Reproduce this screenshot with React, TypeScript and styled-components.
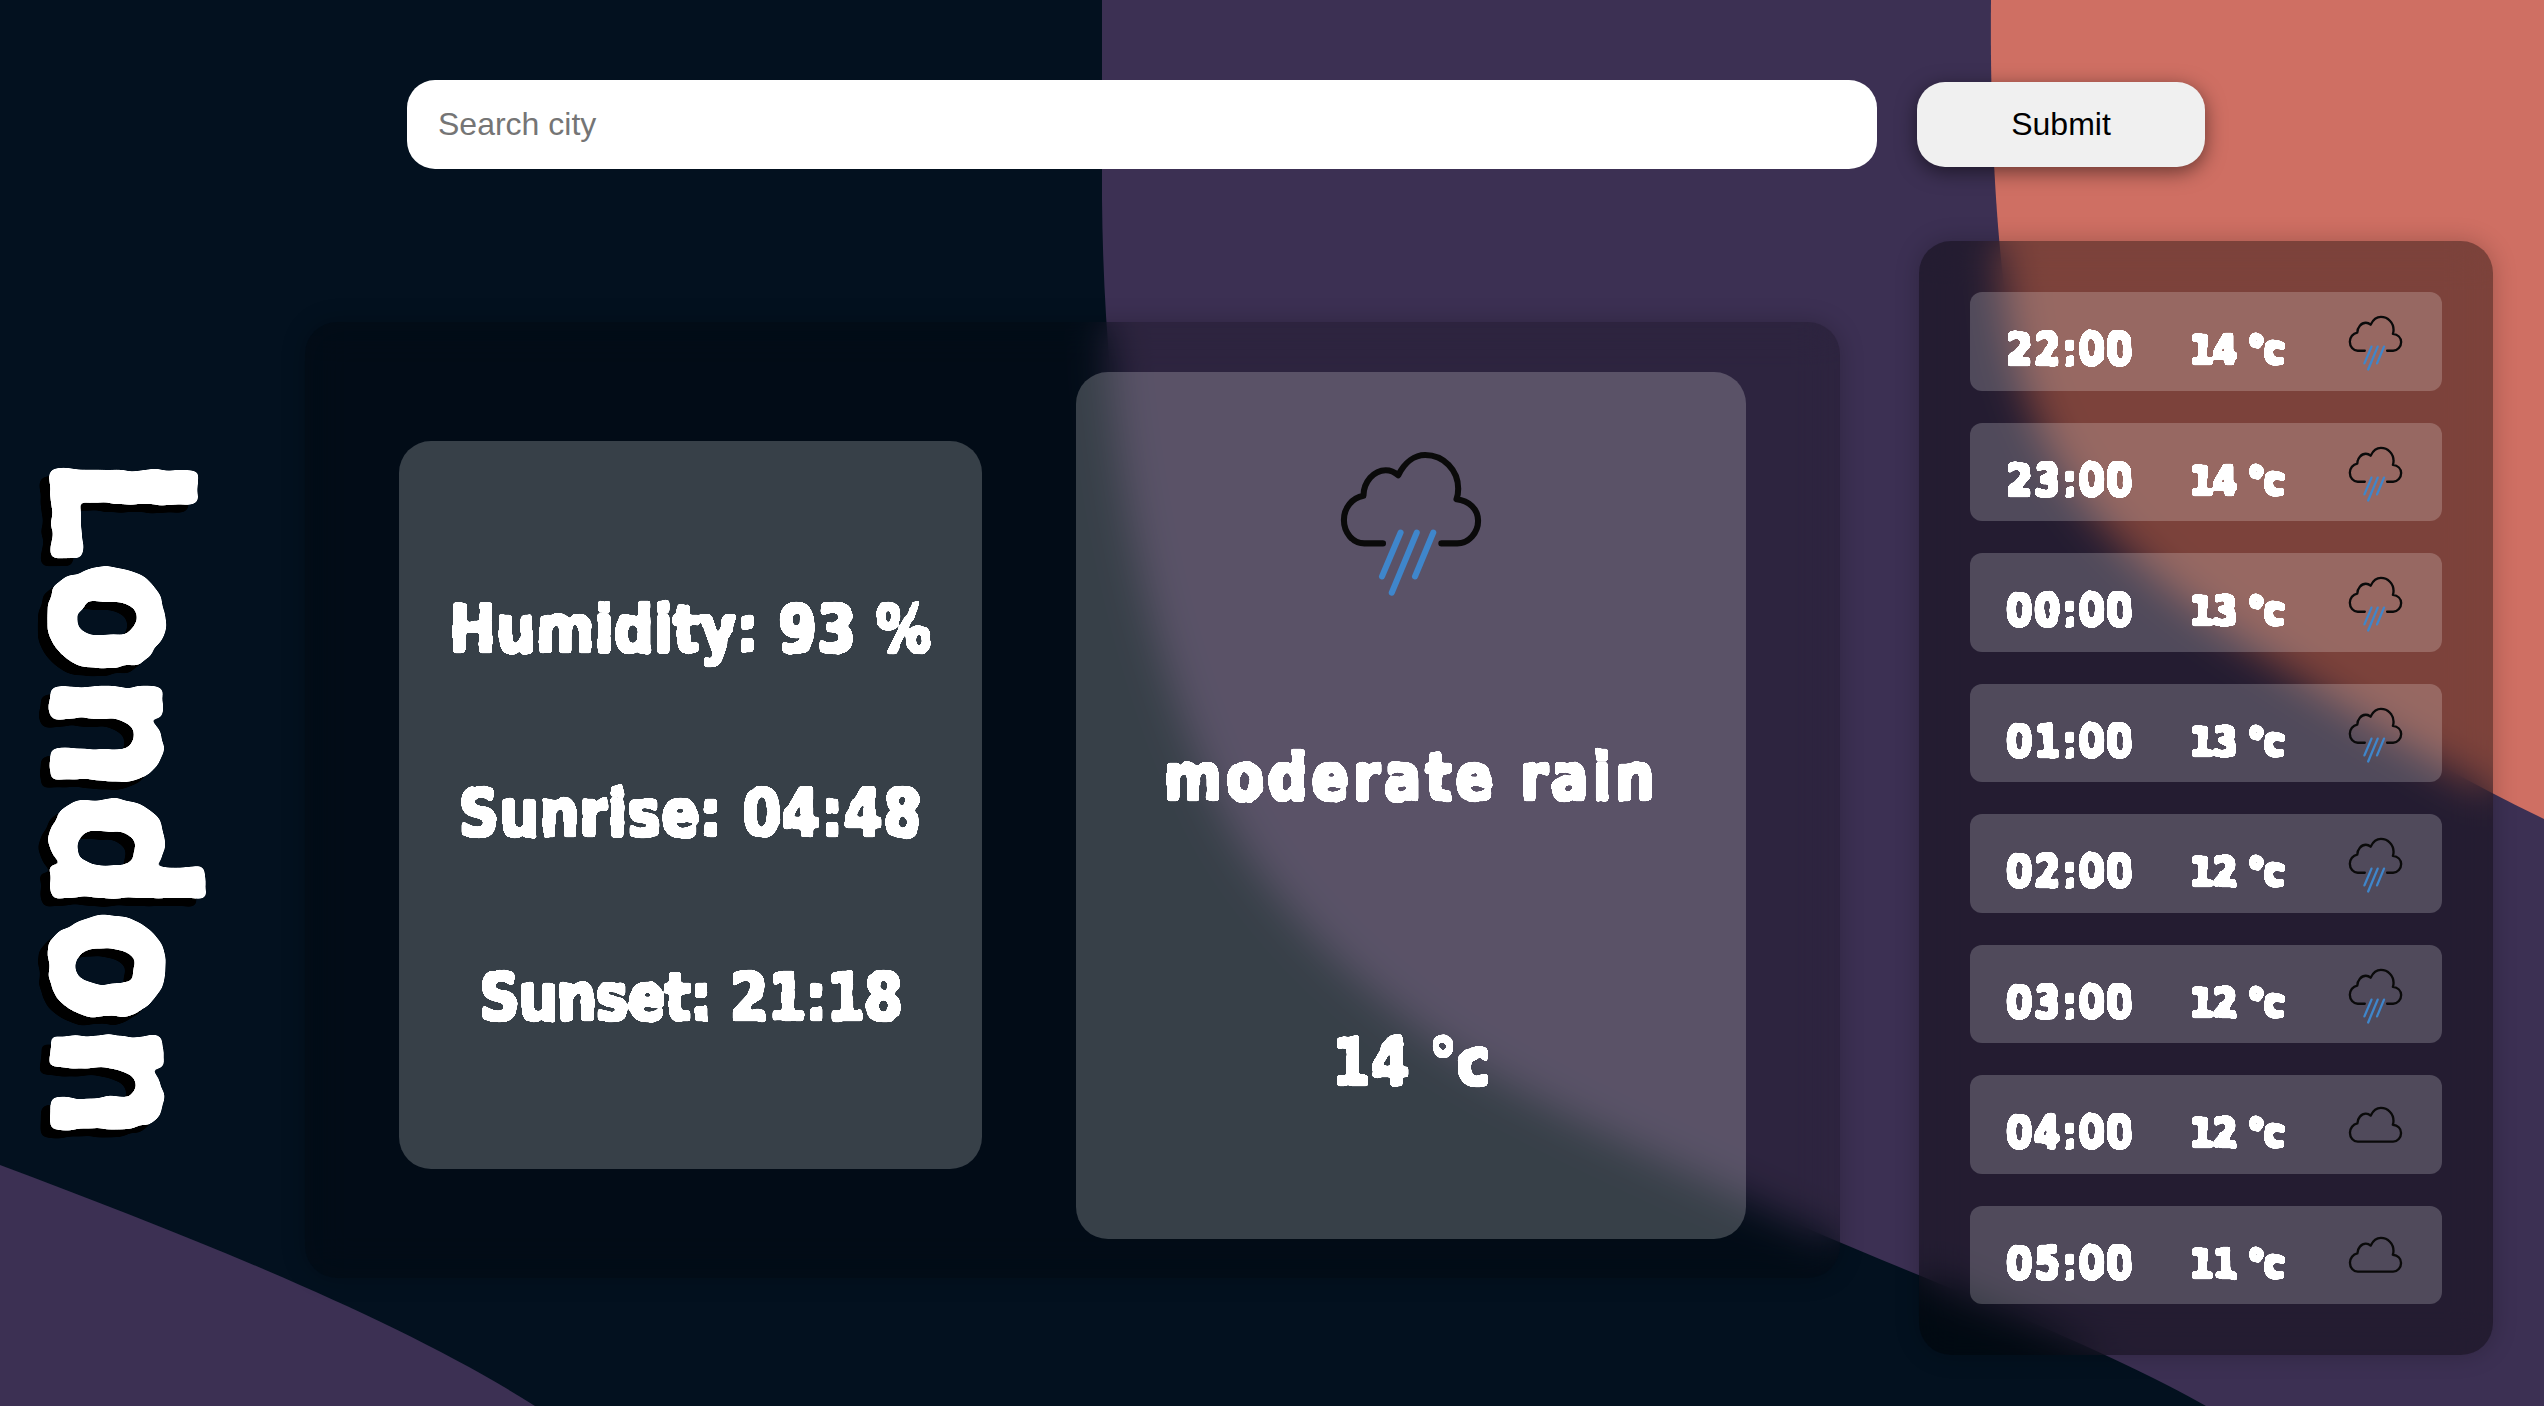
import React from "react";
import styled, { createGlobalStyle } from "styled-components";

const GlobalStyle = createGlobalStyle`
  html, body {
    margin: 0;
    padding: 0;
    height: 100%;
    background: #03111f;
    overflow: hidden;
  }
`;

const Page = styled.div`
  position: relative;
  width: 2544px;
  height: 1406px;
  overflow: hidden;
  font-family: "Liberation Sans", Arial, sans-serif;
`;

const Backdrop = styled.svg`
  position: absolute;
  inset: 0;
  width: 100%;
  height: 100%;
`;

const Content = styled.div`
  position: relative;
  display: flex;
  flex-direction: column;
  height: 100%;
`;

const SearchForm = styled.form`
  display: flex;
  align-items: center;
  gap: 40px;
  margin: 80px 0 72px 407px;
`;

const SearchInput = styled.input`
  box-sizing: border-box;
  width: 1470px;
  height: 89px;
  padding: 0 31px;
  border: none;
  border-radius: 28px;
  background: #fff;
  font-family: inherit;
  font-size: 32px;
  outline: none;

  &::placeholder {
    color: #757575;
  }
`;

const SubmitButton = styled.button`
  width: 288px;
  height: 85px;
  border: none;
  border-radius: 28px;
  background: #f0f0f0;
  color: #000;
  font-family: inherit;
  font-size: 32px;
  box-shadow: 0 5px 20px rgba(0, 0, 0, 0.5);
`;

const Dashboard = styled.div`
  display: grid;
  grid-template-columns: 305px 1535px 574px;
  align-items: center;
`;

const CityColumn = styled.div`
  display: flex;
  justify-content: center;
  padding-right: 66px;
`;

const handDrawn = `
  color: #fff;
  font-family: "DejaVu Sans", sans-serif;
  font-weight: 700;
  white-space: nowrap;
  filter: url(#rough);
`;

const CityName = styled.h1`
  ${handDrawn}
  margin: 0;
  writing-mode: vertical-rl;
  font-size: 165px;
  line-height: 160px;
  transform: scaleX(1.2);
  filter: url(#rough-large) drop-shadow(-8px 8px 0 #000);
`;

const MainPanel = styled.section`
  display: flex;
  align-items: center;
  justify-content: space-evenly;
  box-sizing: border-box;
  height: 956px;
  margin-top: 4px;
  padding-top: 10px;
  border-radius: 32px;
  background: rgba(0, 0, 0, 0.24);
  backdrop-filter: blur(20px);
  box-shadow: 0 0 24px rgba(0, 0, 0, 0.22);
`;

const Card = styled.div<{ $width: number; $height: number }>`
  display: flex;
  flex-direction: column;
  align-items: center;
  box-sizing: border-box;
  width: ${(p) => p.$width}px;
  height: ${(p) => p.$height}px;
  border-radius: 32px;
  background: rgba(255, 255, 255, 0.21);
`;

const DetailsCard = styled(Card)`
  justify-content: center;
  gap: 100px;
  padding-top: 18px;
`;

const WeatherCard = styled(Card)`
  padding-top: 78px;
`;

const BigText = styled.p<{ $spacing?: number }>`
  ${handDrawn}
  margin: 0;
  height: 84px;
  font-size: 56px;
  line-height: 84px;
  letter-spacing: ${(p) => p.$spacing ?? 0}px;
  transform: scaleY(1.18);
`;

const Description = styled(BigText)`
  margin-top: 137px;
`;

const BigTemperature = styled(BigText)`
  margin-top: 201px;
`;

const BigIcon = styled.svg`
  display: block;
  width: 144px;
  height: 149px;
`;

const ForecastPanel = styled.aside`
  display: flex;
  flex-direction: column;
  gap: 32px;
  box-sizing: border-box;
  margin-left: 79px;
  width: 574px;
  height: 1114px;
  padding: 51px;
  border-radius: 32px;
  background: rgba(0, 0, 0, 0.4);
  backdrop-filter: blur(20px);
  box-shadow: 0 0 24px rgba(0, 0, 0, 0.22);
`;

const ForecastRow = styled.div`
  display: flex;
  align-items: center;
  justify-content: space-between;
  flex: 1;
  padding: 0 39px 0 36px;
  border-radius: 12px;
  background: rgba(255, 255, 255, 0.2);
`;

const RowTime = styled.span`
  ${handDrawn}
  font-size: 38px;
  line-height: 50px;
  letter-spacing: 1.5px;
  padding-top: 16px;
  transform: scaleY(1.15);
`;

const RowTemp = styled(RowTime)`
  margin-right: 10px;
  font-size: 36px;
  letter-spacing: -1.5px;
`;

const SmallIcon = styled.svg`
  display: block;
  width: 55px;
  height: 57px;
  margin-top: 5px;
`;

const PlainCloudIcon = styled(SmallIcon)`
  height: 37px;
  margin-top: 0;
`;

const CLOUD_OPEN =
  "M310 367 H255 C220 367 194 335 194 298 C194 262 218 232 252 226 C252 185 283 150 318 150 C332 150 345 156 355 165 C375 125 405 105 435 105 C490 105 533 150 533 205 C533 215 532 226 528 236 C565 240 592 265 592 300 C592 335 565 367 530 367 H483";

const CLOUD_CLOSED = CLOUD_OPEN + " Z";

const RainCloud = ({ as: Icon }: { as: typeof BigIcon }) => (
  <Icon viewBox="180 90 426 442" fill="none" strokeLinecap="round" strokeLinejoin="round" strokeWidth={18}>
    <path d={CLOUD_OPEN} stroke="#0a0a0a" />
    <path d="M362 335 L307 465 M410 335 L336 513 M459 335 L405 465" stroke="#3f86cb" />
  </Icon>
);

const Cloud = () => (
  <PlainCloudIcon viewBox="180 90 426 288" fill="none" strokeLinecap="round" strokeLinejoin="round" strokeWidth={18}>
    <path d={CLOUD_CLOSED} stroke="#0a0a0a" />
  </PlainCloudIcon>
);

const forecast = [
  { time: "22:00", temp: "14", rain: true },
  { time: "23:00", temp: "14", rain: true },
  { time: "00:00", temp: "13", rain: true },
  { time: "01:00", temp: "13", rain: true },
  { time: "02:00", temp: "12", rain: true },
  { time: "03:00", temp: "12", rain: true },
  { time: "04:00", temp: "12", rain: false },
  { time: "05:00", temp: "11", rain: false },
];

const App = () => (
  <Page>
    <GlobalStyle />
    <Backdrop viewBox="0 0 2544 1406" preserveAspectRatio="none">
      <defs>
        <filter id="rough" x="-5%" y="-20%" width="110%" height="140%">
          <feTurbulence type="fractalNoise" baseFrequency="0.09" numOctaves="2" seed="4" result="noise" />
          <feDisplacementMap in="SourceGraphic" in2="noise" scale="3" />
          <feMorphology operator="dilate" radius="0.7" />
          <feGaussianBlur stdDeviation="1.2" />
          <feColorMatrix values="1 0 0 0 0 0 1 0 0 0 0 0 1 0 0 0 0 0 14 -5" />
        </filter>
        <filter id="rough-large" x="-10%" y="-5%" width="120%" height="110%">
          <feTurbulence type="fractalNoise" baseFrequency="0.05" numOctaves="3" seed="7" result="noise" />
          <feDisplacementMap in="SourceGraphic" in2="noise" scale="8" />
          <feGaussianBlur stdDeviation="3" />
          <feColorMatrix values="1 0 0 0 0 0 1 0 0 0 0 0 1 0 0 0 0 0 14 -4" />
        </filter>
      </defs>
      <rect width="2544" height="1406" fill="#3c3053" />
      <path
        d="M0 0 H1102 L1102 200 C1104 400 1130 620 1224 814 C1270 900 1340 970 1420 1030 C1500 1090 1640 1150 1800 1225 C1900 1270 2090 1340 2206 1406 H0 Z"
        fill="#03111f"
      />
      <path d="M0 1165 C200 1240 400 1320 535 1406 H0 Z" fill="#3c3053" />
      <path
        d="M1991 0 C1990 100 1994 240 2012 340 C2035 450 2090 540 2240 640 C2330 700 2440 770 2544 819 V0 Z"
        fill="#cf6f63"
      />
    </Backdrop>
    <Content>
      <SearchForm onSubmit={(e) => e.preventDefault()}>
        <SearchInput placeholder="Search city" />
        <SubmitButton type="submit">Submit</SubmitButton>
      </SearchForm>
      <Dashboard>
        <CityColumn>
          <CityName>London</CityName>
        </CityColumn>
        <MainPanel>
          <DetailsCard $width={583} $height={728}>
            <BigText>Humidity: 93 %</BigText>
            <BigText $spacing={0.4}>Sunrise: 04:48</BigText>
            <BigText $spacing={-1.2}>Sunset: 21:18</BigText>
          </DetailsCard>
          <WeatherCard $width={670} $height={867}>
            <RainCloud as={BigIcon} />
            <Description $spacing={3.5}>moderate rain</Description>
            <BigTemperature>14 °c</BigTemperature>
          </WeatherCard>
        </MainPanel>
        <ForecastPanel>
          {forecast.map((hour) => (
            <ForecastRow key={hour.time}>
              <RowTime>{hour.time}</RowTime>
              <RowTemp>{hour.temp} °c</RowTemp>
              {hour.rain ? <RainCloud as={SmallIcon} /> : <Cloud />}
            </ForecastRow>
          ))}
        </ForecastPanel>
      </Dashboard>
    </Content>
  </Page>
);

export default App;
